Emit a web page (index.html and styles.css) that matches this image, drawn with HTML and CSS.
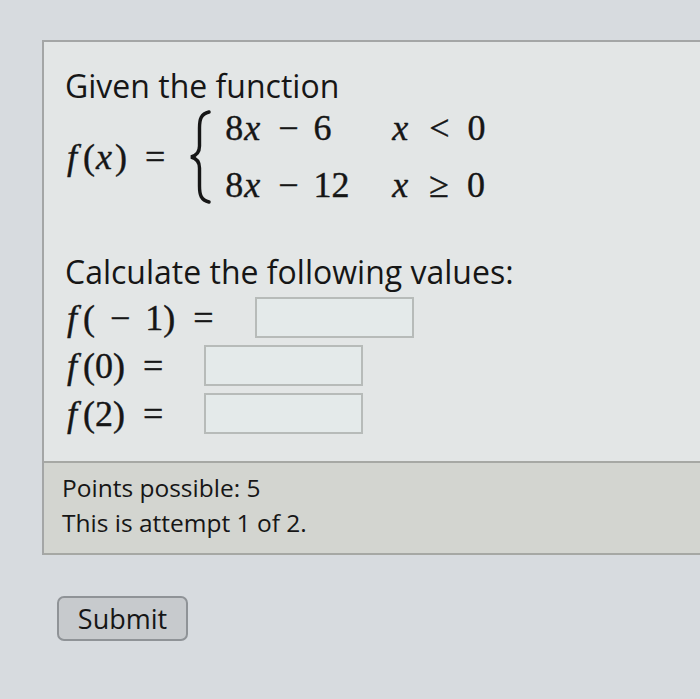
FILE: index.html
```html
<!DOCTYPE html>
<html lang="en">
<head>
    <meta charset="UTF-8">
    <title>Question</title>
    <link rel="stylesheet" href="styles.css">
</head>
<body>

<div class="question">
    <div class="body">
        <p class="given">Given the function</p>

        <div class="piecewise">
            <span class="math lhs"><i class="f">f</i>(<i class="x">x</i>)<span class="rel">=</span></span>
            <svg class="brace" width="24" height="94" viewBox="0 0 24 94">
                <path d="M21 2 C13 4 11.5 9 11.5 18 L11.5 36 C11.5 42 9 45.5 3 47 C9 48.5 11.5 52 11.5 58 L11.5 76 C11.5 85 13 90 21 92" fill="none" stroke="#161616" stroke-width="3.4" stroke-linecap="round"/>
            </svg>
            <div class="cases math">
                <span>8<i class="x">x</i><span class="op">−</span>6</span>
                <span><i class="x">x</i><span class="rel">&lt;</span>0</span>
                <span>8<i class="x">x</i><span class="op">−</span>12</span>
                <span><i class="x">x</i><span class="rel">≥</span>0</span>
            </div>
        </div>

        <p class="calc">Calculate the following values:</p>

        <div class="answer">
            <span class="math"><i class="f">f</i>(<span class="op">−</span>1)<span class="rel">=</span></span>
            <input type="text" class="box">
        </div>
        <div class="answer">
            <span class="math"><i class="f">f</i>(0)<span class="rel">=</span></span>
            <input type="text" class="box">
        </div>
        <div class="answer">
            <span class="math"><i class="f">f</i>(2)<span class="rel">=</span></span>
            <input type="text" class="box">
        </div>
    </div>

    <div class="info">
        <div>Points possible: 5</div>
        <div>This is attempt 1 of 2.</div>
    </div>
</div>

<button class="submit">Submit</button>

</body>
</html>
```

FILE: styles.css
```css
body { margin: 0; background: #d7dbdf; color: #161616; font-family: "Open Sans", sans-serif; overflow: hidden; }
.question { margin: 40px 0 0 42px; border-top: 2px solid #a4a6a6; border-left: 2px solid #a4a6a6; background: #e3e6e6; }
.body { padding: 24px 0 27px 21px; }
.given, .calc { margin: 0; font-size: 32px; line-height: 40px; }
.calc { margin-top: 45px; margin-bottom: 5px; }
.math { font-family: "Liberation Serif", serif; font-size: 36px; -webkit-text-stroke: 0.4px #161616; }
.math i { font-style: italic; }
.f { margin-right: 6px; }
.x { margin: 0 3px 0 1px; }
.op { margin: 0 15px; }
.rel { margin: 0 18px; }
.piecewise { display: flex; align-items: center; }
.lhs { margin-left: 2px; }
.brace { margin: 0 13px 0 5px; }
.cases { display: grid; grid-template-columns: 166px auto; row-gap: 13px; line-height: 44px; }
.answer { display: flex; align-items: center; height: 41px; margin-bottom: 7px; padding-left: 2px; }
.answer:last-child { margin-bottom: 0; }
.box { width: 159px; height: 41px; box-sizing: border-box; margin-left: 23px; border: 2px solid #b7bbb9; background: #e4eaea; }
.info { border-top: 2px solid #a6a8a4; border-bottom: 2px solid #a6a8a4; background: #d3d5d0; padding: 7px 0 13px 18px; font-size: 24.5px; line-height: 35px; }
.submit { margin: 41px 0 0 57px; width: 131px; height: 45px; font-family: "Open Sans", sans-serif; font-size: 27px; color: #161616; background: #c7cacd; border: 2px solid #8f9397; border-radius: 7px; padding: 0; }
```
